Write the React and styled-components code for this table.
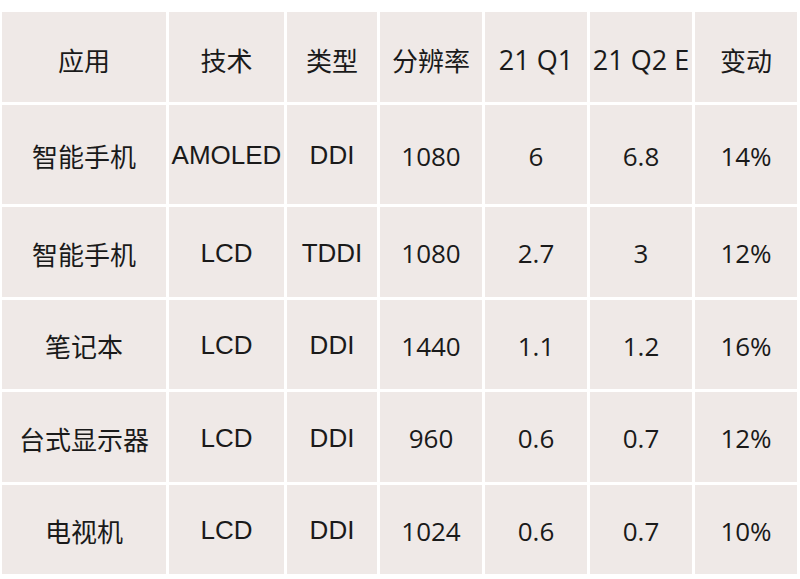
import React from 'react';
import styled, { createGlobalStyle } from 'styled-components';

const GlobalStyle = createGlobalStyle`
  html, body {
    margin: 0;
    padding: 0;
    background: #ffffff;
  }
`

const fonts = {
  cjk: '"Noto Sans CJK SC", "Noto Sans", sans-serif',
  latin: '"Liberation Sans", "Noto Sans CJK SC", sans-serif',
  num: '"Open Sans", "Noto Sans CJK SC", sans-serif',
};

const sizes = { cjk: '26px', latin: '26px', num: '26px', wide: '27px' };

const Page = styled.div`
  width: 800px;
  height: 579px;
  padding: 12px 3px 4px 2px;
  box-sizing: border-box;
  background: #ffffff;
`

const Grid = styled.div`
  display: grid;
  grid-template-columns: 164px 115px 90px 102px 102px 102px 102px;
  grid-template-rows: 90px 99px 90px 89px 90px 89px;
  gap: 3px;
  background: #ffffff;
`

const Cell = styled.div`
  display: flex;
  align-items: center;
  justify-content: center;
  background: #efe9e7;
  color: #1a1a1a;
  font-family: ${props => props.font === 'wide' ? fonts.num : (fonts[props.font] || fonts.cjk)};
  font-size: ${props => sizes[props.font] || sizes.cjk};
  font-weight: 400;
  white-space: nowrap;
  padding-top: ${props => props.head ? '4px' : '2px'};
`

const header = [
  ['应用', 'cjk'], ['技术', 'cjk'], ['类型', 'cjk'], ['分辨率', 'cjk'],
  ['21 Q1', 'wide'], ['21 Q2 E', 'wide'], ['变动', 'cjk'],
];

const rows = [
  ['智能手机', 'AMOLED', 'DDI', '1080', '6', '6.8', '14%'],
  ['智能手机', 'LCD', 'TDDI', '1080', '2.7', '3', '12%'],
  ['笔记本', 'LCD', 'DDI', '1440', '1.1', '1.2', '16%'],
  ['台式显示器', 'LCD', 'DDI', '960', '0.6', '0.7', '12%'],
  ['电视机', 'LCD', 'DDI', '1024', '0.6', '0.7', '10%'],
];

const rowFonts = ['cjk', 'latin', 'latin', 'num', 'num', 'num', 'num'];

export default function App() {
  return (
    <Page>
      <GlobalStyle />
      <Grid>
        {header.map(([text, font]) => (
          <Cell key={text} font={font} head>{text}</Cell>
        ))}
        {rows.map((row, r) =>
          row.map((text, c) => (
            <Cell key={r + '-' + c} font={rowFonts[c]}>{text}</Cell>
          ))
        )}
      </Grid>
    </Page>
  );
}
